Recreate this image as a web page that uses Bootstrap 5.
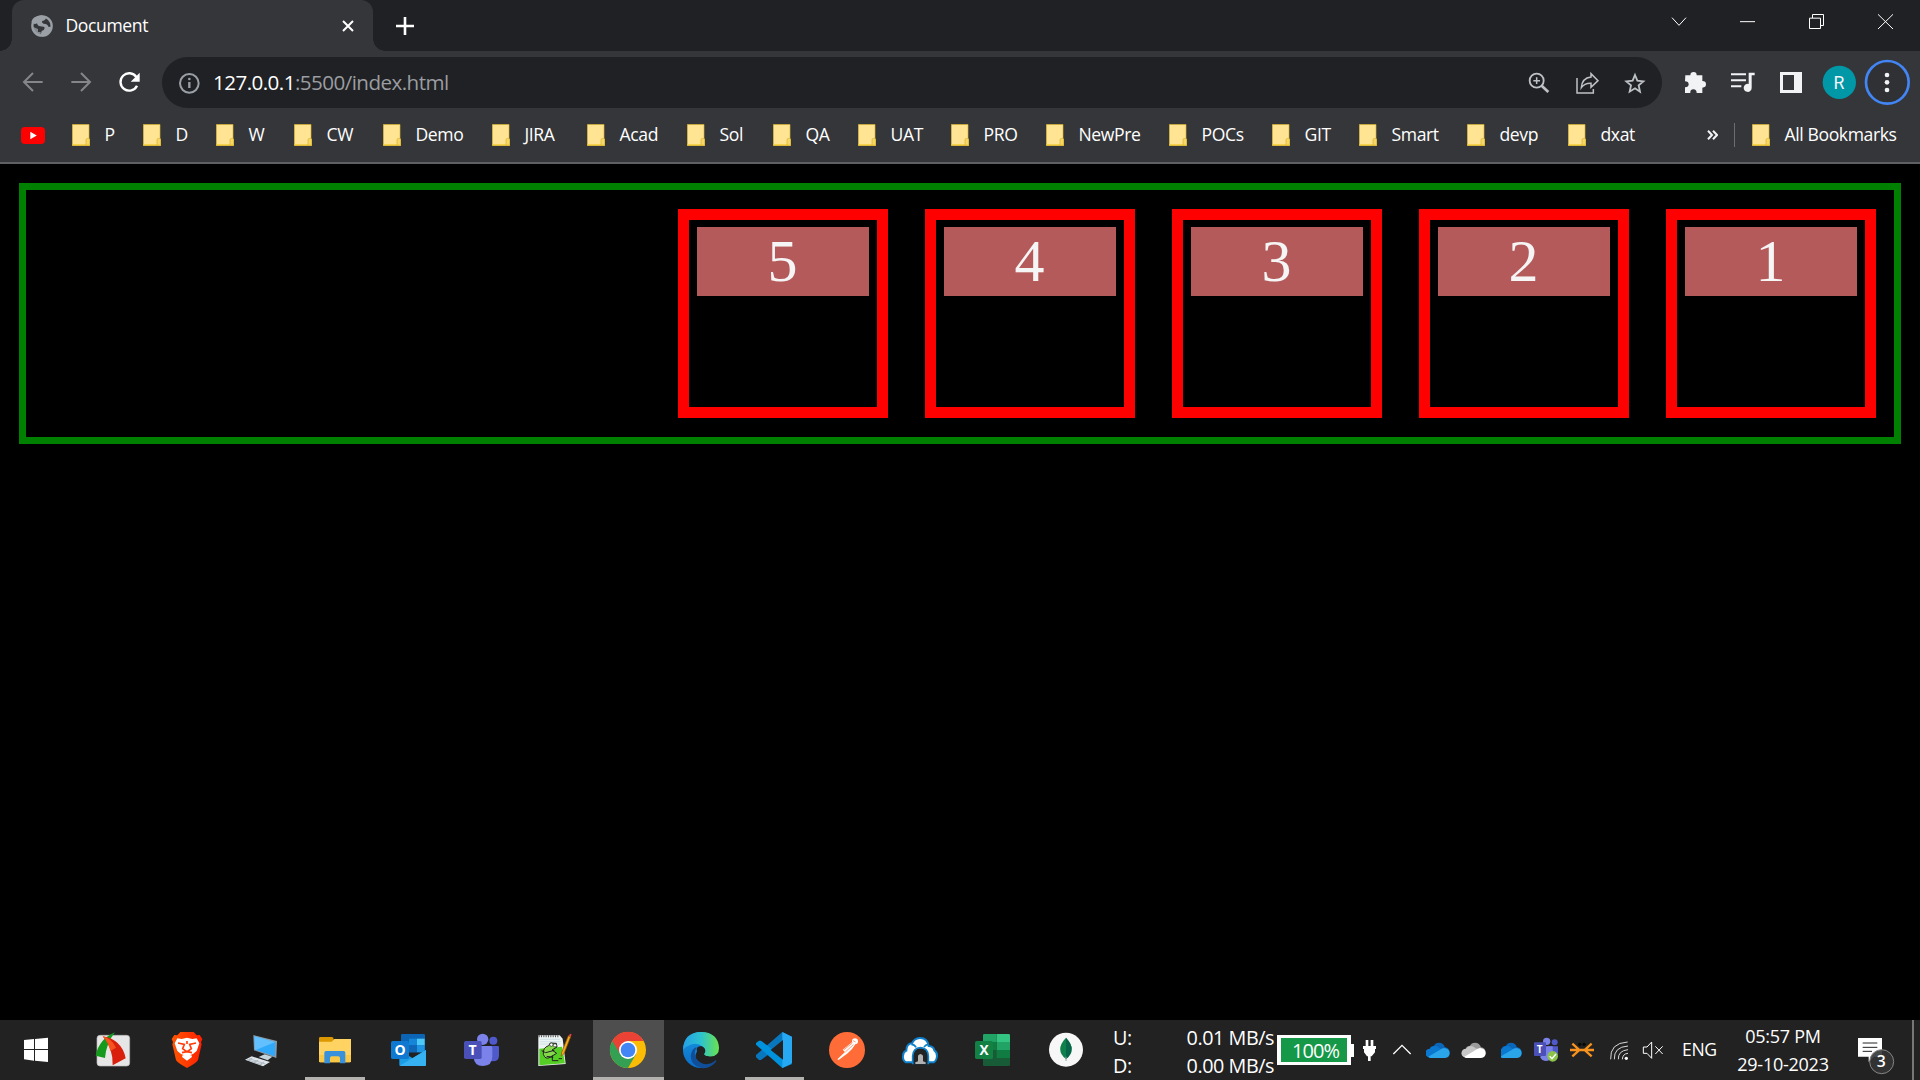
<!DOCTYPE html>
<html lang="en">
<head>
<meta charset="utf-8">
<title>Document</title>
<link href="https://cdn.jsdelivr.net/npm/bootstrap@5.3.0/dist/css/bootstrap.min.css" rel="stylesheet">
<style>
body{width:1920px;height:1080px;overflow:hidden;background:#000;color:#fff;font-family:"Open Sans","Noto Sans",sans-serif;font-size:17.6px;letter-spacing:-.4px;line-height:1}
svg{display:block;flex:none}
.browser-head{background:#35363a;border-bottom:2px solid #5f6063;height:164px}
.tab-strip{background:#202124;height:51px}
.page-tab{position:relative;margin-left:12px;width:361px;height:51px;background:#35363a;border-radius:12px 12px 0 0}
.page-tab::before,.page-tab::after{content:"";position:absolute;bottom:0;width:12px;height:12px}
.page-tab::before{left:-12px;background:radial-gradient(circle at 0 0,#202124 11.5px,#35363a 12px)}
.page-tab::after{right:-12px;background:radial-gradient(circle at 100% 0,#202124 11.5px,#35363a 12px)}
.tab-icon{margin-left:19px}
.tab-title{margin-left:12.5px}
.tab-close{margin-right:19px}
.new-tab{margin:17px 0 0 23px}
.tool-row{height:57px;padding-top:6px}
.omnibox{width:1500px;height:51px;border-radius:26px;background:#202124}
.url-text{font-size:20.6px;letter-spacing:-.55px;color:#9a9da1;margin-left:3px;padding-bottom:1px}
.bm-row{height:54px;padding-left:21px}
.bm-row .bm{display:flex;align-items:center;flex:none;white-space:nowrap}
.bm svg{margin-right:14.5px}
.bm span{padding-bottom:1px}
.yt{width:51px}
.bm:nth-child(2){width:71px}.bm:nth-child(3){width:73px}.bm:nth-child(4){width:78px}.bm:nth-child(5){width:89px}
.bm:nth-child(6){width:109px}.bm:nth-child(7){width:95px}.bm:nth-child(8){width:100px}.bm:nth-child(9){width:86px}
.bm:nth-child(10){width:85px}.bm:nth-child(11){width:93px}.bm:nth-child(12){width:95px}.bm:nth-child(13){width:123px}
.bm:nth-child(14){width:103px}.bm:nth-child(15){width:87px}.bm:nth-child(16){width:108px}.bm:nth-child(17){width:101px}
.bm:nth-child(18){width:139px}
.bm-sep{width:1px;height:24px;background:#6b6d70;margin:0 17px 0 16px}
.viewport-area{height:856px;padding:19px}
.flex-box{height:261px;border:7px solid green;padding:19px 18px;gap:37px}
.item-box{width:210px;height:209px;border:11px solid red;padding:7px 8px}
.item-num{height:69px;background:#b55a5a;color:#f5f5f5;font:60px/69px "Liberation Serif",serif;letter-spacing:0;text-align:center;padding-right:1px}
.task-bar{height:60px;background:#222}
.apps{gap:2px}
.net{margin-left:11px;width:161px;font-size:19.8px;line-height:28px;letter-spacing:-.45px;padding-top:3px}
.battery{width:74px;height:30px;margin-left:3px;border:4px solid #fff;border-width:3px 4px;background:#159848;font-size:20px;letter-spacing:-.9px;padding:2px 0 0 3px}
.lang{margin-left:16px;width:34px}
.clock{width:94px;line-height:28px;margin-left:20px;font-size:18px;letter-spacing:-.25px}
svg text{letter-spacing:0}
</style>
</head>
<body class="d-flex flex-column">
<svg width="0" height="0" class="position-absolute">
<defs>
<symbol id="folder" viewBox="0 0 54 65"><path d="M1 1h50v42l2 2v19H1z" fill="#ffe493" stroke="#d9b32b" stroke-width="2"/><path d="M1 62h52" stroke="#f5cf3c" stroke-width="4"/><path d="M42 63V47q0-4 4-4h3q4 0 4 4v16z" fill="#f7d765" stroke="#d9b32b" stroke-width="2"/></symbol>
<symbol id="onedrive" viewBox="0 0 72 50"><path d="M12 46a12 12 0 0 1-1-25Q13 12 23 12 28 2 39 2q14 0 18 14 13 1 14 15 0 15-14 15z" fill="#0a66b8"/><path d="M12 47a13 13 0 0 1 0-27q5-8 14-8 8 0 14 6l16 10-30 19z" fill="#0b78d0"/><path d="M7 44l34-20q4-5 13-6 16 2 17 15 0 14-14 15H15q-5 0-8-4z" fill="#2aa5ea"/></symbol>
</defs>
</svg>

<header class="browser-head">
  <div class="tab-strip d-flex">
    <div class="page-tab d-flex align-items-center">
      <svg class="tab-icon" width="22" height="22" viewBox="93 45 66 66"><circle cx="126" cy="78" r="29" fill="none" stroke="#9aa0a6" stroke-width="7"/><path d="M126 46l12 8q-2 8-12 9-1 7 5 8 12 0 14 9l9 1q-6 24-28 29l-4-5 3-12q8-1 9-9 0-5-13-5-8 0-10-9-6 4-13-1l-4-3Q97 48 126 46z" fill="#9aa0a6"/><path d="M98 80l16 7v9h8v11Q99 104 98 80z" fill="#9aa0a6" opacity=".8"/></svg>
      <span class="tab-title">Document</span>
      <svg width="12" height="12" viewBox="0 0 12 12" class="tab-close ms-auto"><path d="M1 1l10 10M11 1L1 11" stroke="#fff" stroke-width="2"/></svg>
    </div>
    <svg class="new-tab" width="18" height="18" viewBox="0 0 18 18"><path d="M9 0v18M0 9h18" stroke="#fff" stroke-width="2.6"/></svg>
    <svg width="280" height="51" viewBox="600 0 840 153" class="ms-auto" fill="none" stroke="#fff" stroke-width="3"><path d="M696 53l21 23 21-23M900 65h45M1108.500 54.500h33v31h-33zM1117.500 54V43.500h33v33h-9M1314 43l45 44M1359 43l-45 44"/></svg>
  </div>
  <div class="tool-row d-flex">
    <svg width="162" height="51" viewBox="0 171 486 153" fill="none" stroke-width="6"><path d="M128 246H73M99 219l-27 27 27 27M214 246h55M243 219l27 27-27 27" stroke="#85868a"/><path d="M409 231a26 26 0 1 0 2 26" stroke="#fff" stroke-width="7"/><path d="M419 218v27h-27z" fill="#fff"/></svg>
    <div class="omnibox d-flex align-items-center">
      <svg width="48" height="51" viewBox="486 171 144 153"><circle cx="568" cy="250" r="28" fill="none" stroke="#9aa0a6" stroke-width="6"/><path d="M568 246v18" stroke="#9aa0a6" stroke-width="7"/><circle cx="568" cy="237" r="4" fill="#9aa0a6"/></svg>
      <div class="url-text"><span class="text-white">127.0.0.1</span>:5500/index.html</div>
      <svg class="ms-auto" width="142" height="51" viewBox="240 171 426 153" fill="none" stroke="#bdc1c6" stroke-width="5.5"><circle cx="290" cy="242" r="21"/><path d="M305 257l20 19" stroke-width="8"/><path d="M280 242h20M290 232v20" stroke-width="4.500"/><path d="M411 234v45h49v-12M424 263q2-29 29-32v-10l21 21-21 20v-12q-19-1-29 13z" stroke-width="4.500"/><path d="M585 225l7 17 18 2-14 12 4 19-15-10-16 10 4-19-14-12 19-2z"/></svg>
    </div>
    <svg width="258" height="51" viewBox="666 171 774 153" fill="#f1f3f4"><path d="M736 226h15q0-10 10-10 9 0 9 10h17v17q11 0 11 10t-11 10v16h-17q0-11-10-11t-9 11h-16v-17q11 0 11-9t-11-9z"/><path d="M873 223h45M873 241h45M873 259h31" stroke="#f1f3f4" stroke-width="6"/><path d="M926 218h18v8h-9v37a12 12 0 1 1-9-11z"/><path d="M1020 216h66v63h-66zM1029 225v45h33v-45z" fill-rule="evenodd"/><circle cx="1198" cy="247" r="50" fill="#0097a7"/><text x="1197" y="266" font-family="Roboto" font-size="53" text-anchor="middle">R</text><circle cx="1342" cy="247" r="64" fill="#303134" stroke="#4285f4" stroke-width="8"/><circle cx="1341" cy="225" r="7"/><circle cx="1341" cy="247" r="7"/><circle cx="1341" cy="270" r="7"/></svg>
  </div>
  <nav class="bm-row d-flex align-items-center">
    <div class="yt"><svg width="24" height="17" viewBox="0 0 24 17"><rect width="24" height="17" rx="4" fill="#f00"/><path d="M9.300 4.700v7.600l6.500-3.800z" fill="#fff"/></svg></div>
    <div class="bm"><svg width="18" height="22"><use href="#folder"/></svg><span>P</span></div>
    <div class="bm"><svg width="18" height="22"><use href="#folder"/></svg><span>D</span></div>
    <div class="bm"><svg width="18" height="22"><use href="#folder"/></svg><span>W</span></div>
    <div class="bm"><svg width="18" height="22"><use href="#folder"/></svg><span>CW</span></div>
    <div class="bm"><svg width="18" height="22"><use href="#folder"/></svg><span>Demo</span></div>
    <div class="bm"><svg width="18" height="22"><use href="#folder"/></svg><span>JIRA</span></div>
    <div class="bm"><svg width="18" height="22"><use href="#folder"/></svg><span>Acad</span></div>
    <div class="bm"><svg width="18" height="22"><use href="#folder"/></svg><span>Sol</span></div>
    <div class="bm"><svg width="18" height="22"><use href="#folder"/></svg><span>QA</span></div>
    <div class="bm"><svg width="18" height="22"><use href="#folder"/></svg><span>UAT</span></div>
    <div class="bm"><svg width="18" height="22"><use href="#folder"/></svg><span>PRO</span></div>
    <div class="bm"><svg width="18" height="22"><use href="#folder"/></svg><span>NewPre</span></div>
    <div class="bm"><svg width="18" height="22"><use href="#folder"/></svg><span>POCs</span></div>
    <div class="bm"><svg width="18" height="22"><use href="#folder"/></svg><span>GIT</span></div>
    <div class="bm"><svg width="18" height="22"><use href="#folder"/></svg><span>Smart</span></div>
    <div class="bm"><svg width="18" height="22"><use href="#folder"/></svg><span>devp</span></div>
    <div class="bm"><svg width="18" height="22"><use href="#folder"/></svg><span>dxat</span></div>
    <svg width="11" height="10" viewBox="0 0 11 10" fill="none" stroke="#f1f3f4" stroke-width="2"><path d="M1 .7L5 5 1 9.300M6 .7L10 5l-4 4.300"/></svg>
    <div class="bm-sep"></div>
    <div class="bm"><svg width="18" height="22"><use href="#folder"/></svg><span>All Bookmarks</span></div>
  </nav>
</header>

<main class="viewport-area">
  <div class="flex-box d-flex flex-row-reverse">
    <div class="item-box"><div class="item-num">1</div></div>
    <div class="item-box"><div class="item-num">2</div></div>
    <div class="item-box"><div class="item-num">3</div></div>
    <div class="item-box"><div class="item-num">4</div></div>
    <div class="item-box"><div class="item-num">5</div></div>
  </div>
</main>

<footer class="task-bar d-flex align-items-center">
  <svg width="82" height="60" viewBox="0 15 246 180"><path d="M72 75l30-3v30H72zM105 72l39-4v34h-39zM72 105h30v32l-30-4zM105 105h39v36l-39-4z" fill="#fff"/></svg>
  <div class="apps d-flex">
    <svg width="71" height="60" viewBox="246 15 213 180"><rect x="291" y="61" width="98" height="92" rx="9" fill="#e6e6e6" stroke="#bbb" stroke-width="2"/><path d="M345 52q-48 20-58 70l28 7q4-45 30-77z" fill="#159a1d"/><path d="M308 64q58 10 69 66l-39 21q1-54-30-87z" fill="#d8200c"/><path d="M308 64q28 7 40 34l-17 10q-7-27-23-44z" fill="#f5541e"/></svg>
    <svg width="71" height="60" viewBox="465 15 213 180"><linearGradient id="br"><stop stop-color="#ff5601"/><stop offset="1" stop-color="#ff1f00"/></linearGradient><path d="M541 51h40l9 10 9-1 8 12-4 10 2 6-11 47q-3 8-33 24-30-16-33-24l-11-47 2-6-4-10 8-12 9 1z" fill="url(#br)"/><path d="M532 70l13 2 16-4 16 4 13-2 8 15-8 23-10 8-13 6-6 3-6-3-13-6-10-8-8-23zM546 122l15-7 15 7-1 5-14 10-14-10z" fill="#fff"/><path d="M534 84l19 4-5 13 12 9M588 84l-19 4 5 13-12 9M561 78v9M546 113l15-3 15 3" fill="none" stroke="#ff3d0a" stroke-width="5"/></svg>
    <svg width="71" height="60" viewBox="684 15 213 180"><path d="M760 60l71 18-2 51-67-23z" fill="#8e9aa3"/><path d="M763 64l63 17-1 43-60-20z" fill="#31a9fb"/><path d="M763 64l63 17-57 23-4 0z" fill="#62c0ff"/><path d="M776 126l18-8 23 7-14 11z" fill="#c4d4dd"/><path d="M735 134l20-10 55 17-21 13z" fill="#e0e7ec"/><path d="M748 131l48 16M741 134l46 16M757 129l-13 7M775 135l-14 7M792 141l-13 8" stroke="#97a5ae" stroke-width="2"/></svg>
    <svg width="71" height="60" viewBox="903 15 213 180"><path d="M957 70q0-4 4-4h34q6 0 6 7v8h-44z" fill="#dc9800"/><path d="M957 80h38l8-8h50v66q0 4-4 4h-88q-4 0-4-4z" fill="#ffd362"/><path d="M957 120h96v18q0 4-4 4h-88q-4 0-4-4z" fill="#f9c846"/><path d="M973 145v-32q0-5 5-5h53q5 0 5 5v32h-16v-16q0-5-5-5h-20q-5 0-5 5v16z" fill="#3991dc"/><path d="M915 186h180v9H915z" fill="#b4b2af"/></svg>
    <svg width="71" height="60" viewBox="42 15 213 180"><path d="M123 61q0-4 4-4h64q4 0 4 4v51h-72z" fill="#0b64b4"/><path d="M147 71h24v20h-24z" fill="#1685d8"/><path d="M171 71h23v20h-23z" fill="#4dc8f7"/><path d="M147 91h24v21h-24z" fill="#1065b5"/><path d="M171 91h23v21h-23z" fill="#1e94e4"/><path d="M118 105l40 25 40-25v44q0 4-4 4h-72q-4 0-4-4z" fill="#1b9de5"/><path d="M198 105l-79 47 5 1h70q4 0 4-4z" fill="#36b1f1"/><rect x="93" y="78" width="54" height="54" rx="5" fill="#0f78d0"/><text x="120" y="120" text-anchor="middle" font-size="42" font-weight="700" fill="#fff">O</text></svg>
    <svg width="71" height="60" viewBox="261 15 213 180"><circle cx="368" cy="73" r="17" fill="#7b83eb"/><circle cx="400" cy="77" r="12" fill="#5059c9"/><path d="M380 93h33q4 0 4 4v25q0 17-19 17-10 0-18-8z" fill="#5059c9"/><path d="M345 93h47q5 0 5 5v26q0 29-28 29-27 0-28-27z" fill="#7b83eb"/><rect x="312" y="78" width="53" height="54" rx="5" fill="#4a50b8"/><text x="338" y="119" text-anchor="middle" font-size="42" font-weight="700" fill="#fff">T</text></svg>
    <svg width="71" height="60" viewBox="480 15 213 180"><path d="M535 61h64l9 10 9 76-82 6z" fill="#eef4f4"/><path d="M538 101l68-6 9 50-77 6z" fill="#55cf24"/><path d="M540 73h60M540 80h62M540 87h60" stroke="#bed9df" stroke-width="2"/><path d="M536 64h62" stroke="#555" stroke-width="6" stroke-dasharray="3 4"/><path d="M550 118q-2-21 16-26l5-8 18 1 2 11-15 9 14 10-20 12q-14 8-20-9z" fill="#86d94d" stroke="#222" stroke-width="3"/><circle cx="574" cy="89" r="5" fill="#fff" stroke="#222" stroke-width="2"/><circle cx="585" cy="91" r="5" fill="#fff" stroke="#222" stroke-width="2"/><path d="M545 107l12 6 26-7M560 124l20 3M577 121v16h18M596 131h10" stroke="#222" stroke-width="3" fill="none"/><path d="M603 124l2-12 20-50 7 3-20 51z" fill="#f5a91b" stroke="#895008" stroke-width="2"/><path d="M626 63l4-7 5 2-3 8z" fill="#dc443c"/></svg>
    <svg width="71" height="60" viewBox="699 15 213 180"><path d="M699 15h213v180H699z" fill="#4e4e4e"/><circle cx="804" cy="105" r="54" fill="#fbbc05"/><path d="M804 105l-47-27a54 54 0 0 1 94 0z" fill="#ea4335"/><path d="M757 78a54 54 0 0 0 47 81l24-41-24-13z" fill="#34a053"/><path d="M804 78h47l-24 40-23-13z" fill="#fbbc05"/><path d="M757 78l24 40 23-40z" fill="#ea4335"/><circle cx="804" cy="105" r="27" fill="#fff"/><circle cx="804" cy="105" r="22" fill="#4285f4"/><path d="M699 186h213v9H699z" fill="#b4b2af"/></svg>
    <svg width="71" height="60" viewBox="918 15 213 180"><linearGradient id="ea"><stop stop-color="#249fe8"/><stop offset=".5" stop-color="#2dc2ce"/><stop offset="1" stop-color="#6ae34e"/></linearGradient><linearGradient id="eb" x2="0" y2="1"><stop stop-color="#1896df"/><stop offset="1" stop-color="#0b6dc9"/></linearGradient><circle cx="1023" cy="105" r="54" fill="url(#eb)"/><path d="M1024 94q-34 32-2 55 25 12 47-14l10-2v-30h-40z" fill="#222"/><path d="M969 104q2-52 54-53 52 1 54 48 0 28-32 25-17-1-12-9 8-11-5-20-15-13-36-6-15 5-23 15z" fill="url(#ea)"/><path d="M1010 96q-16 30 14 48 22 10 43-8 3 0 2 3-18 24-45 20-30-6-32-35 2-22 18-28z" fill="#114e99"/><path d="M1010 101q3-9 14-7 10 2 11 13 0 6-3 9 0 7 14 8-4 8-18 4-18-7-18-27z" fill="#222"/></svg>
    <svg width="71" height="60" viewBox="57 15 213 180"><path d="M187 51L108 120v7l9 8h6l93-69z" fill="#0877bd"/><path d="M187 159L108 89v-5l9-7h6l93 70z" fill="#0092dc"/><path d="M187 51l29 14v80l-29 14z" fill="#27a8f2"/><path d="M189 75v59l-37-29z" fill="#222"/><path d="M75 186h177v9H75z" fill="#b4b2af"/></svg>
    <svg width="71" height="60" viewBox="276 15 213 180"><circle cx="381" cy="105" r="54" fill="#ff6c37"/><circle cx="405" cy="79" r="9" fill="#fff"/><path d="M396 82l-28 22 7 7-23 22 4 2 27-20 13-13 10-14z" fill="#fff"/><path d="M399 77l8 4M371 105l26-21M376 111l24-22" stroke="#ff6c37" stroke-width="2"/></svg>
    <svg width="71" height="60" viewBox="495 15 213 180"><path d="M558 142q-11-6-9-20 1-12 10-15 0-20 17-22 7-15 23-16 23-1 27 24 15 1 17 13 9 6 8 17-1 14-10 19z" fill="#fff" stroke="#0f80cb" stroke-width="6"/><path d="M574 88q11 1 14 9M624 88q-7 1-12 8" fill="none" stroke="#0f80cb" stroke-width="5"/><path d="M578 145v-22q2-24 23-25 23 1 24 25v22z" fill="#222" stroke="#0f80cb" stroke-width="5"/><path d="M581 142h41v7h-41z" fill="#222"/><path d="M594 139v-17q7-10 15 0v17l8 3v5h-31v-5z" fill="#b0b0b0"/></svg>
    <svg width="71" height="60" viewBox="714 15 213 180"><path d="M789 61q0-4 4-4h37v24h-41z" fill="#21a366"/><path d="M830 57h36q4 0 4 4v20h-40z" fill="#33c481"/><path d="M789 81h41v24h-41z" fill="#107c41"/><path d="M830 81h40v24h-40z" fill="#21a366"/><path d="M789 105h81v44q0 4-4 4h-73q-4 0-4-4z" fill="#185c37"/><path d="M830 105h40v24h-40z" fill="#107c41"/><rect x="765" y="78" width="54" height="54" rx="5" fill="#138044"/><text x="792" y="119" text-anchor="middle" font-size="41" font-weight="700" fill="#fff">X</text></svg>
    <svg width="71" height="60" viewBox="933 15 213 180"><circle cx="1038" cy="104" r="51" fill="#f7f7f7"/><path d="M1038 68q-35 37 0 64 34-27 0-64z" fill="#10804d"/><path d="M1038 68q34 37 0 64z" fill="#076647"/><path d="M1038 125v13" stroke="#8aa698" stroke-width="3"/></svg>
  </div>
  <div class="net"><div class="d-flex justify-content-between"><span>U:</span><span>0.01 MB/s</span></div><div class="d-flex justify-content-between"><span>D:</span><span>0.00 MB/s</span></div></div>
  <div class="battery d-flex align-items-center justify-content-center">100%</div>
  <svg width="150" height="60" viewBox="753 15 450 180"><path d="M753 87h9v39h-9zM797 75h8v18h-8zM812 75h8v18h-8zM789 93h39v9h-3v10l-10 12h-3v14h-8v-14h-3l-9-12v-10h-3z" fill="#fff"/><path d="M880 117l26-26 26 26" fill="none" stroke="#fff" stroke-width="4"/><use href="#onedrive" x="978" y="81" width="72" height="50"/><g transform="translate(1086 81)"><path d="M12 46a12 12 0 0 1-1-25Q13 12 23 12 28 2 39 2q14 0 18 14 13 1 14 15 0 15-14 15z" fill="#9b9b9b"/><path d="M12 47a13 13 0 0 1 0-27q5-8 14-8 8 0 14 6l16 10-30 19z" fill="#c7c7c7"/><path d="M7 44l34-20q4-5 13-6 16 2 17 15 0 14-14 15H15q-5 0-8-4z" fill="#fff"/></g></svg>
  <svg width="165" height="60" viewBox="3 15 495 180"><use href="#onedrive" x="-6" y="81" width="72" height="50"/><circle cx="140" cy="79" r="11" fill="#7b83eb"/><circle cx="164" cy="82" r="9" fill="#5059c9"/><path d="M142 94h32v24l-12 10h-20z" fill="#5059c9"/><path d="M126 94h32v30q-6 14-22 14-10-1-15-10z" fill="#7b83eb"/><rect x="102" y="82" width="36" height="41" rx="3" fill="#4a50b8"/><text x="119" y="114" text-anchor="middle" font-size="30" font-weight="700" fill="#fff">T</text><circle cx="158" cy="124" r="16" fill="#8bc34a"/><path d="M149 124l7 7 12-14" fill="none" stroke="#fff" stroke-width="4"/><path d="M210 105h72M217 86l21 19-21 19M275 86l-21 19 21 19" fill="none" stroke="#f7921e" stroke-width="7"/><circle cx="239" cy="88" r="5" fill="#080808"/><circle cx="252" cy="88" r="5" fill="#080808"/><g fill="none" stroke="#d9d9d9" stroke-width="3"><path d="M332 133q-3-49 51-52M343 133q-2-37 41-40M355 133q-1-26 29-29M367 133q1-17 17-18"/><path d="M430 96h11l14-15v49l-14-15h-11zM466 94l22 23M488 94l-22 23" stroke="#fff"/></g><circle cx="379" cy="130" r="5" fill="#fff"/></svg>
  <span class="lang">ENG</span>
  <div class="clock text-center text-nowrap"><div>05:57 PM</div><div>29-10-2023</div></div>
  <svg width="90" height="60" viewBox="990 15 270 180" class="ms-auto"><path d="M1074 69h72v56h-24l-16 16v-16h-32z" fill="#fff"/><path d="M1088 84h44M1088 97h44M1088 109h28" stroke="#222" stroke-width="3"/><circle cx="1145" cy="140" r="36" fill="#343434" fill-opacity=".9" stroke="#858585" stroke-width="3"/><text x="1144" y="157" text-anchor="middle" font-size="47" font-weight="600" fill="#fff">3</text><path d="M1236 15h6v180h-6z" fill="#777"/></svg>
</footer>
<script src="https://cdn.jsdelivr.net/npm/bootstrap@5.3.0/dist/js/bootstrap.bundle.min.js"></script>
</body>
</html>
